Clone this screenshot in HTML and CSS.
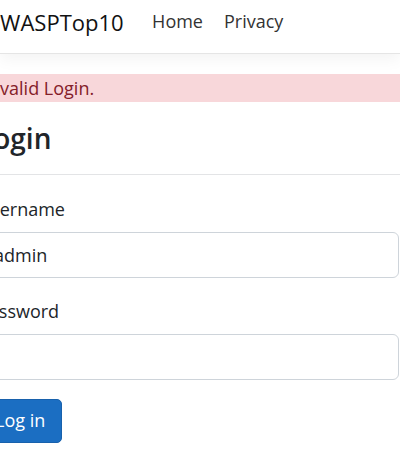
FILE: index.html
```html
<!DOCTYPE html>
<html lang="en">
<head>
<meta charset="utf-8">
<title>Login - OWASPTop10</title>
<link rel="stylesheet" href="styles.css">
</head>
<body>
<header class="topbar">
  <nav class="navbar">
    <a class="brand" href="#">OWASPTop10</a>
    <ul class="nav">
      <li><a class="nav-link" href="#">Home</a></li>
      <li><a class="nav-link" href="#">Privacy</a></li>
    </ul>
  </nav>
</header>
<main class="page">
  <div class="alert">Invalid Login.</div>
  <h1 class="title">Login</h1>
  <hr class="rule">
  <form class="login-form">
    <div class="field">
      <label class="label" for="username">Username</label>
      <input class="input" id="username" type="text" value="admin">
    </div>
    <div class="field">
      <label class="label" for="password">Password</label>
      <input class="input" id="password" type="password">
    </div>
    <button class="btn" type="button">Log in</button>
  </form>
</main>
</body>
</html>
```
FILE: styles.css
```css
* { box-sizing: border-box; }

html, body {
  margin: 0;
  padding: 0;
  overflow: hidden;
}

body {
  font-family: "Open Sans", "Noto Sans", sans-serif;
  font-size: 18px;
  line-height: 1.5;
  color: #212529;
  background: #fff;
}

.topbar {
  border-bottom: 1px solid #e5e5e5;
  box-shadow: 0 5px 15px rgba(0, 0, 0, 0.05);
  background: #fff;
}

.navbar {
  display: flex;
  align-items: center;
  height: 53px;
  padding: 0 0 8px;
  margin-left: -17px;
}

.brand {
  font-size: 22px;
  line-height: 33px;
  color: #111;
  text-decoration: none;
  margin-right: 18px;
  white-space: nowrap;
}

.nav {
  display: flex;
  list-style: none;
  margin: 0;
  padding: 0;
}

.nav-link {
  display: block;
  padding: 0 10.5px 2px;
  color: #333;
  text-decoration: none;
}

.page {
  margin-left: -22px;
  padding-top: 20px;
}

.alert {
  background: #f8d7da;
  color: #842029;
  padding: 0 6px;
  line-height: 28px;
}

.title {
  font-size: 28px;
  font-weight: 600;
  line-height: 1.2;
  margin: 20px 0 18px;
}

.rule {
  border: 0;
  border-top: 1px solid #e3e4e6;
  margin: 0 0 21px;
}

.login-form {
  margin-right: 1px;
}

.field {
  margin-bottom: 20px;
}

.label {
  display: block;
  margin-bottom: 9px;
}

.input {
  display: block;
  width: 100%;
  height: 46px;
  padding: 0 15px;
  font: inherit;
  color: #212529;
  background: #fff;
  border: 1px solid #ced4da;
  border-radius: 6px;
}

.btn {
  margin-top: -1px;
  height: 44px;
  padding: 0 16px;
  font: inherit;
  color: #fff;
  background: #1b6ec2;
  border: 1px solid #1861ac;
  border-radius: 5px;
}
```
